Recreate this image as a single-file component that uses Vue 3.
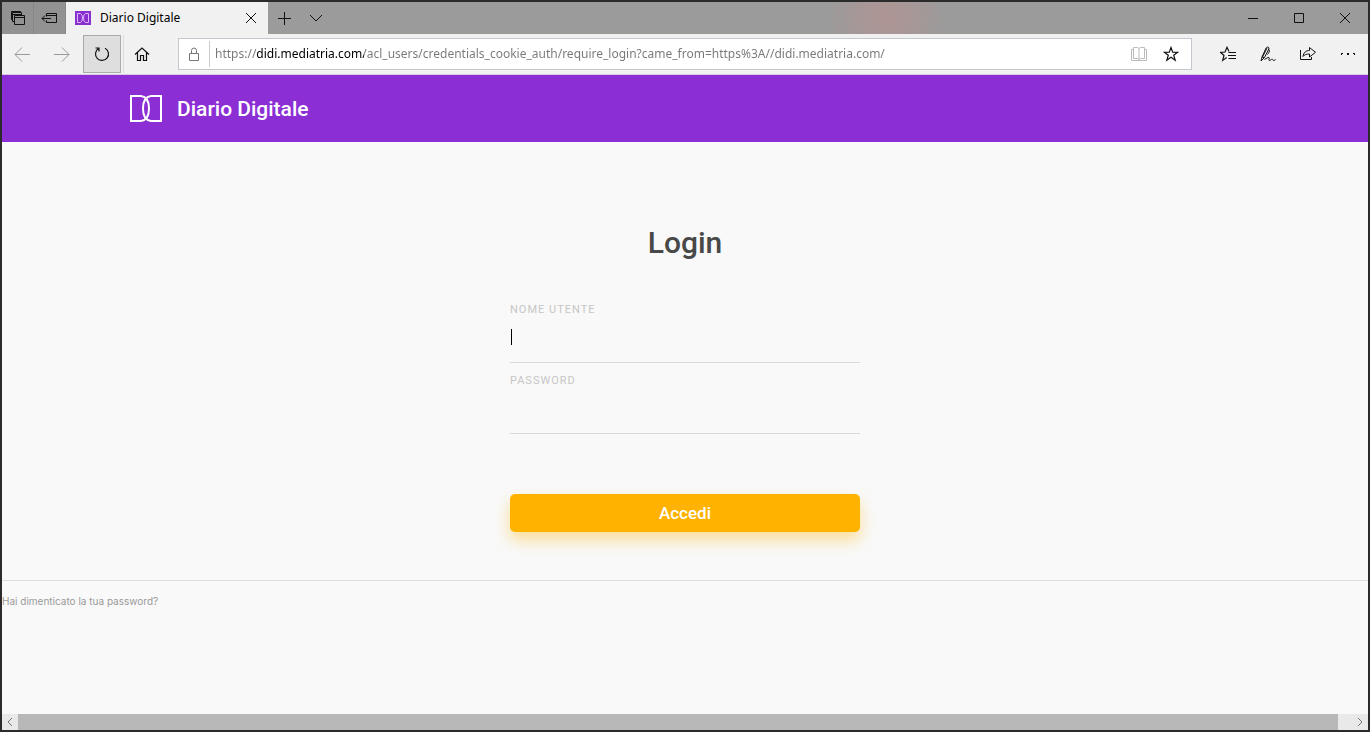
<script setup>
import { ref } from 'vue'

const address = ref('https://didi.mediatria.com/acl_users/credentials_cookie_auth/require_login?came_from=https%3A//didi.mediatria.com/')
const username = ref('')
const password = ref('')
</script>

<template>
  <div class="window">
    <header class="titlebar">
      <button class="tool set-aside" aria-label="Schede messe da parte">
        <svg width="16" height="16" viewBox="0 0 16 16"><path d="M4.500 5.500h10v9h-10zM4.500 7.500h10M4.500 11.500h-2v-9h9v3M2.500 4.500h9M2.500 9.500h-1v-8h9v1" /></svg>
      </button>
      <button class="tool set-aside" aria-label="Metti da parte le schede">
        <svg width="17" height="16" viewBox="0 0 17 16"><path d="M5.500 6.500v-3h10v9h-10v-2M5.500 5.500h10M10 8.500H1M4 5.500L1 8.500l3 3" /></svg>
      </button>
      <div class="tab">
        <svg class="favicon" width="16" height="14" viewBox="0 0 16 14"><path class="fill" d="M0 0h16v14H0z" /><path d="M2.500 2.500h3q2 1 2 4.500t-2 4.500h-3zM13.500 2.500h-3q-2 1-2 4.500t2 4.500h3z" /></svg>
        <span class="tab-title">Diario Digitale</span>
        <button class="tab-close" aria-label="Chiudi scheda">
          <svg width="12" height="12" viewBox="0 0 12 12"><path d="M1 1l10 10M11 1L1 11" /></svg>
        </button>
      </div>
      <button class="tool" aria-label="Nuova scheda">
        <svg width="14" height="14" viewBox="0 0 14 14"><path d="M7.500 1v13M1 7.500h13" /></svg>
      </button>
      <button class="tool" aria-label="Mostra anteprime">
        <svg width="14" height="8" viewBox="0 0 14 8"><path d="M1 1l6 6 6-6" /></svg>
      </button>
      <div class="controls">
        <button aria-label="Riduci a icona"><svg width="12" height="12" viewBox="0 0 12 12"><path d="M1 6.500h10" /></svg></button>
        <button aria-label="Ingrandisci"><svg width="12" height="12" viewBox="0 0 12 12"><path d="M1.500 1.500h9v9h-9z" /></svg></button>
        <button aria-label="Chiudi"><svg width="12" height="12" viewBox="0 0 12 12"><path d="M1 1l10 10M11 1L1 11" /></svg></button>
      </div>
    </header>

    <nav class="toolbar" aria-label="Navigazione">
      <button class="nav dim" aria-label="Indietro"><svg width="16" height="16" viewBox="0 0 16 16"><path d="M16 8.500H1M8 1.500L1 8.500l7 7" /></svg></button>
      <button class="nav dim" aria-label="Avanti"><svg width="16" height="16" viewBox="0 0 16 16"><path d="M0 8.500h15M8 1.500l7 7-7 7" /></svg></button>
      <button class="nav pressed" aria-label="Aggiorna"><svg width="16" height="16" viewBox="0 0 16 16"><path class="medium" d="M11 2.200A6.500 6.500 0 1 1 4.500 2.500M1.500 2h3.500v3.500" /></svg></button>
      <button class="nav home" aria-label="Pagina iniziale"><svg width="16" height="16" viewBox="0 0 16 16"><path class="medium" d="M1 8.500l7-6.500 7 6.500M3.500 6.500v8h3v-5h3v5h3v-8" /></svg></button>
      <div class="address">
        <svg class="lock" width="12" height="14" viewBox="0 0 12 14"><path d="M1.500 6.500h9v7h-9zM3.500 6.500V3.500a2.500 2.500 0 0 1 5 0v3" /></svg>
        <input v-model="address" class="url" type="text" aria-label="Indirizzo" spellcheck="false" />
        <button class="reader" aria-label="Visualizzazione di lettura"><svg width="16" height="14" viewBox="0 0 16 14"><path d="M2.500 .5h4l1.500 1 1.500-1h4v11h-4l-1.500 1-1.500-1h-4zM8 1.500v11M2.500 2.500h-2v11h15v-11h-2" /></svg></button>
        <button class="star" aria-label="Aggiungi ai preferiti"><svg width="16" height="16" viewBox="0 0 16 16"><path class="medium" d="M8 1.500l1.700 4.700 5 .1-4 3 1.500 4.900L8 11.300l-4.200 2.900 1.500-4.900-4-3 5-.1z" /></svg></button>
      </div>
      <div class="actions">
        <button aria-label="Hub"><svg width="16" height="16" viewBox="0 0 16 16"><path class="medium" d="M9 5.500L7 1.300 5 6l-4.500.3 3.500 3.200L2.700 14.400l4-2.800" /><path d="M8.500 6.500H16M8 9.500h8M8.500 12.500H16" /></svg></button>
        <button aria-label="Aggiungi note"><svg width="16" height="16" viewBox="0 0 16 16"><path d="M1 15l1-4L6 2.200C7 .2 9.600 1 8.800 3L4.500 11.500 1 15M2 11l2.500.7M7 2l-4.500 9M9 3.500c1 2-.3 3.500-1.500 5M4.500 13.500c2-1 3.500-2.500 4.500-2 1 .6-1 3 .3 3 1.500 0 2-1.500 3-1.300.8.200.3 1.300 1.300 1.300 1 0 1.400-.5 2-1" /></svg></button>
        <button aria-label="Condividi"><svg width="16" height="16" viewBox="0 0 16 16"><path d="M.5 4v9.500h11V11M3 10.500C3.500 6.500 6 4.500 9.500 4.500v-3l6 4.800-6 4.700V8C6.500 8 4.500 8.500 3 10.500z" /></svg></button>
        <button aria-label="Impostazioni e altro"><svg width="16" height="16" viewBox="0 0 16 16"><path class="fill" d="M1 7h1v2H1zM7 7h2v2H7zM14 7h1v2h-1zM1 7h2v1H1zM13 7h2v1h-2z" /></svg></button>
      </div>
    </nav>

    <div class="page">
      <header class="brand">
        <svg width="32" height="28" viewBox="0 0 32 28"><path d="M1 1h10q8 1 8 12.500t-8 12.500H1zM31 1H21q-8 1-8 12.500t8 12.500h10z" /></svg>
        <span>Diario Digitale</span>
      </header>
      <main>
        <form class="login" @submit.prevent>
          <h1>Login</h1>
          <div class="field active">
            <label for="username">NOME UTENTE</label>
            <input id="username" v-model="username" type="text" autocomplete="username" />
          </div>
          <div class="field">
            <label for="password">PASSWORD</label>
            <input id="password" v-model="password" type="password" autocomplete="current-password" />
          </div>
          <button class="submit" type="submit">Accedi</button>
        </form>
      </main>
      <footer>
        <a href="#">Hai dimenticato la tua password?</a>
      </footer>
    </div>

    <div class="scrollbar">
      <button aria-label="Scorri a sinistra"><svg width="6" height="10" viewBox="0 0 6 10"><path d="M5 1L1 5l4 4" /></svg></button>
      <div class="thumb"></div>
      <button class="right" aria-label="Scorri a destra"><svg width="6" height="10" viewBox="0 0 6 10"><path d="M1 1l4 4-4 4" /></svg></button>
    </div>
  </div>
</template>

<style>
body {
  margin: 0;
}
</style>

<style scoped>
* {
  box-sizing: border-box;
}
.window {
  display: flex;
  flex-direction: column;
  min-height: 100vh;
  border: 2px solid #2b2b2b;
  background: #f9f9f9;
  font-family: Roboto, "Liberation Sans", sans-serif;
}
button {
  display: flex;
  align-items: center;
  justify-content: center;
  flex: none;
  padding: 0;
  border: 0;
  background: none;
  font-family: inherit;
}
svg {
  flex: none;
  fill: none;
  stroke: #111;
  stroke-width: 1;
}
.fill {
  fill: #111;
  stroke: none;
}
.medium {
  stroke-width: 1.2;
}
.titlebar {
  display: flex;
  height: 32px;
  background: radial-gradient(ellipse 60px 60px at 884px 16px, #b09494, #9b9b9b) #9b9b9b;
}
.tool {
  width: 32px;
}
.set-aside {
  border-right: 1px solid #878787;
  background: #929292;
}
.tab {
  display: flex;
  align-items: center;
  width: 202px;
  padding: 0 10px 0 9px;
  background: #f1f1f1;
}
.favicon {
  stroke: #dcb6ff;
}
.favicon .fill {
  fill: #8730cf;
}
.tab-title {
  flex: 1;
  padding-left: 9px;
  color: #000;
  font: 12px/16px "Noto Sans", "Open Sans", sans-serif;
}
.tab-close {
  width: 14px;
  height: 20px;
}
.controls {
  display: flex;
  margin-left: auto;
}
.controls button {
  width: 46px;
}
.toolbar {
  display: flex;
  align-items: center;
  height: 41px;
  border-bottom: 1px solid #d8cbe3;
  background: #f1f1f1;
}
.nav {
  width: 40px;
  height: 38px;
}
.dim svg {
  stroke: #999;
}
.pressed {
  width: 38px;
  margin-left: 1px;
  border: 1px solid #aaa;
  background: #dedede;
}
.home {
  width: 37px;
  margin-left: 2px;
  border-left: 1px solid #ddd;
}
.address {
  display: flex;
  align-items: center;
  flex: 1;
  height: 32px;
  margin-left: 18px;
  padding-right: 4px;
  border: 1px solid #c3c8ce;
  background: #fff;
}
.lock {
  margin: 0 9px;
  stroke: #777;
}
.url {
  flex: 1;
  min-width: 0;
  height: 26px;
  padding: 0 0 0 5px;
  border: 0;
  border-left: 1px solid #ccc;
  outline: 0;
  background: linear-gradient(90deg, #777 47px, #000 47px, #000 154px, #777 154px);
  background-clip: text;
  color: transparent;
  font: 12px/26px "Noto Sans", "Open Sans", sans-serif;
}
.reader,
.star {
  width: 32px;
}
.reader svg {
  stroke: #bbb;
}
.actions {
  display: flex;
  margin-left: 16px;
}
.actions button {
  width: 40px;
}
.page {
  flex: 1;
}
.brand {
  display: flex;
  align-items: center;
  gap: 15px;
  height: 67px;
  padding: 0 128px;
  background: #8b2fd5;
  color: #fff;
  font-size: 21px;
  font-weight: 500;
  line-height: 24px;
}
.brand svg {
  stroke: #fff;
  stroke-width: 2;
}
main {
  padding: 81px 20px 48px;
  border-bottom: 1px solid #ddd;
}
.login {
  max-width: 350px;
  margin: 0 auto;
}
h1 {
  margin: 0 0 39px;
  color: #484848;
  font-size: 30px;
  font-weight: 500;
  line-height: 40px;
  text-align: center;
}
.field {
  position: relative;
  height: 71px;
}
.field label {
  display: block;
  color: #c6c6c6;
  font-size: 11px;
  line-height: 16px;
  letter-spacing: 1px;
}
.field input {
  width: 100%;
  height: 45px;
  padding: 0 0 8px;
  border: 0;
  border-bottom: 1px solid #d9d9d9;
  border-radius: 0;
  outline: 0;
  background: transparent;
  font: 16px/20px Roboto, sans-serif;
}
.active::after {
  content: "";
  position: absolute;
  top: 27px;
  left: 1px;
  width: 1px;
  height: 16px;
  background: #000;
}
.submit {
  width: 100%;
  height: 38px;
  margin-top: 50px;
  border-radius: 5px;
  background: #ffb300;
  box-shadow: 0 8px 16px rgba(255, 179, 0, 0.4);
  color: #fff;
  font-size: 17px;
  font-weight: 500;
  line-height: 20px;
}
footer {
  padding: 12px 0;
  font: 10px/16px Inter, Roboto, sans-serif;
}
footer a {
  color: #999;
  text-decoration: none;
}
.scrollbar {
  display: flex;
  height: 16px;
  background: #e9e9e9;
}
.scrollbar button {
  width: 16px;
}
.scrollbar .right {
  width: 30px;
  padding-left: 14px;
}
.scrollbar svg {
  stroke: #777;
}
.thumb {
  flex: 1;
  background: #b8b8b8;
}
</style>
